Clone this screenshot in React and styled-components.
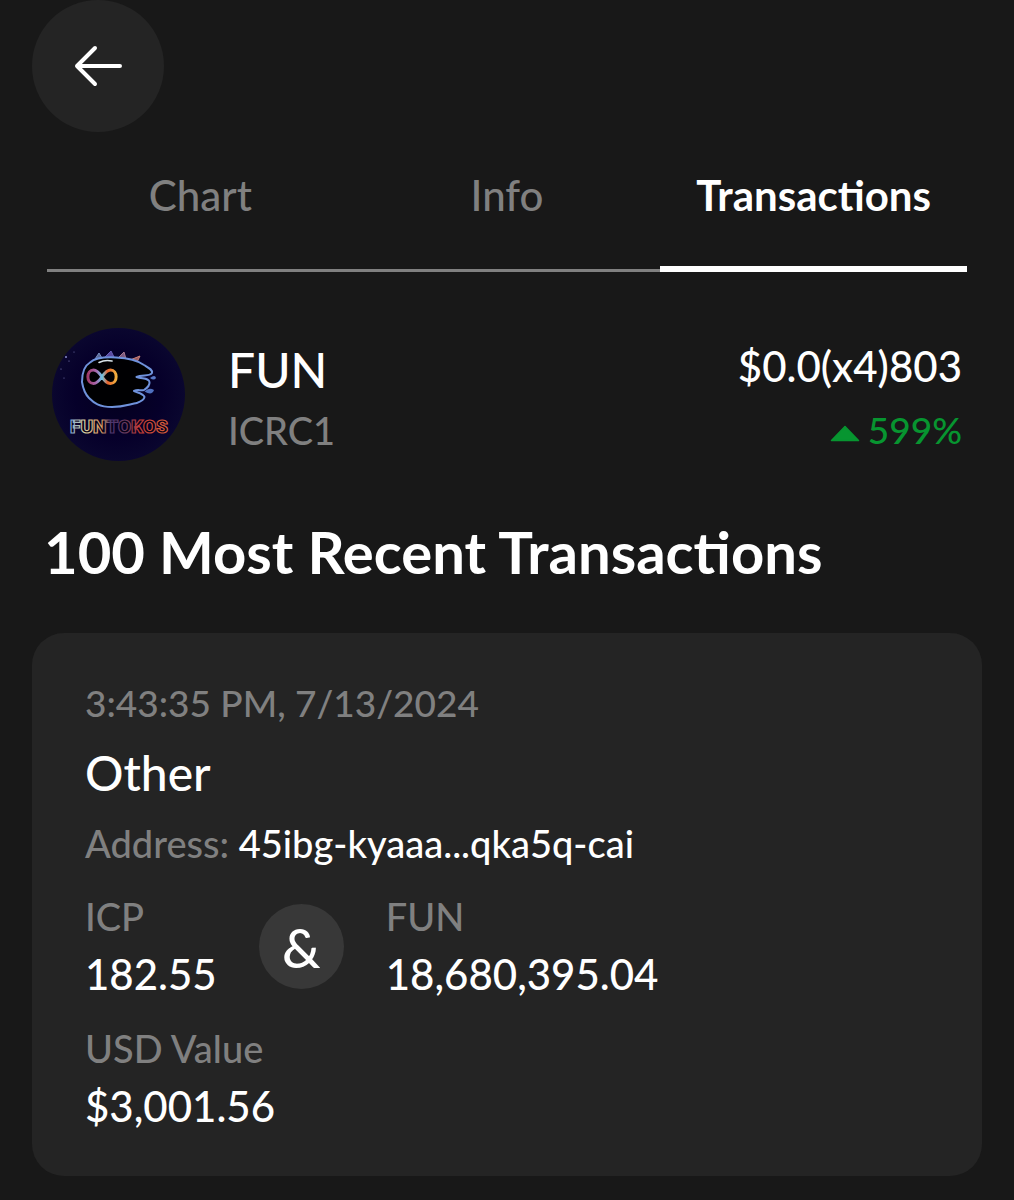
import styled, { createGlobalStyle } from "styled-components";

const GlobalStyle = createGlobalStyle`
  :root {
    --color-Background: #181818;
    --color-Card: #242424;
    --color-Badge: #383838;
    --color-White: #ffffff;
    --color-Gray: #808080;
    --color-Green: #079530;
  }
  * {
    box-sizing: border-box;
    margin: 0;
    padding: 0;
  }
  body {
    background-color: var(--color-Background);
    color: var(--color-White);
    font-family: Lato, "Liberation Sans", sans-serif;
    font-weight: 500;
  }
`;

const PageStyle = styled.main`
  min-height: 100vh;
  padding: 0 32px 24px;
`;

const BackButtonStyle = styled.button`
  display: flex;
  align-items: center;
  justify-content: center;
  width: 132px;
  height: 132px;
  border: none;
  border-radius: 50%;
  color: var(--color-White);
  background-color: var(--color-Card);
  cursor: pointer;
`;

const TabsStyle = styled.nav`
  display: grid;
  grid-template-columns: repeat(3, 1fr);
  margin: 0 15px;
  padding-top: 38px;
`;

const TabStyle = styled.button`
  height: 102px;
  padding-bottom: ${(props) => (props.$active ? "46px" : "49px")};
  border: none;
  border-bottom: ${(props) =>
    props.$active
      ? "6px solid var(--color-White)"
      : "3px solid var(--color-Gray)"};
  color: ${(props) =>
    props.$active ? "var(--color-White)" : "var(--color-Gray)"};
  background: none;
  font-family: inherit;
  font-size: 42px;
  font-weight: ${(props) => (props.$active ? 700 : 500)};
  line-height: 50px;
  cursor: pointer;
`;

const TokenStyle = styled.section`
  display: flex;
  align-items: center;
  column-gap: 43px;
  margin: 56px 20px 0;
`;

const TokenLogoStyle = styled.svg`
  flex: none;
  width: 133px;
  height: 133px;
`;

const TokenNameStyle = styled.h1`
  font-size: 48px;
  font-weight: 500;
  line-height: 70px;
`;

const TokenTypeStyle = styled.p`
  color: var(--color-Gray);
  font-size: 38px;
  line-height: 50px;
`;

const TokenPriceStyle = styled.div`
  display: flex;
  flex-direction: column;
  align-items: flex-end;
  row-gap: 8px;
  margin-left: auto;
`;

const PriceStyle = styled.p`
  font-size: 42px;
  line-height: 62px;
`;

const ChangeStyle = styled.p`
  display: flex;
  align-items: center;
  column-gap: 8px;
  color: var(--color-Green);
  font-size: 37px;
  line-height: 50px;
`;

const HeadingStyle = styled.h2`
  margin: 56px 12px 46px;
  font-size: 58px;
  font-weight: 700;
  line-height: 70px;
`;

const CardStyle = styled.article`
  display: flex;
  flex-direction: column;
  row-gap: 18px;
  padding: 46px 53px 45px;
  border-radius: 32px;
  background-color: var(--color-Card);
`;

const MutedStyle = styled.p`
  color: var(--color-Gray);
  font-size: 38px;
  line-height: 47px;
`;

const DateStyle = styled(MutedStyle)`
  font-size: 37px;
`;

const CardTitleStyle = styled.h3`
  font-size: 48px;
  font-weight: 500;
  line-height: 58px;
`;

const AddressStyle = styled.span`
  color: var(--color-White);
`;

const AmountsStyle = styled.div`
  display: flex;
  align-items: center;
  column-gap: 42px;
  padding: 8px 0;
`;

const AmountStyle = styled.div`
  display: flex;
  flex-direction: column;
  row-gap: 9px;
`;

const ValueStyle = styled.p`
  font-size: 42px;
  line-height: 50px;
`;

const AndStyle = styled.span`
  display: flex;
  align-items: center;
  justify-content: center;
  width: 85px;
  height: 85px;
  padding-top: 4px;
  border-radius: 50%;
  background-color: var(--color-Badge);
  font-size: 54px;
  line-height: 64px;
`;

const tabs = ["Chart", "Info", "Transactions"];

function ArrowIcon() {
  return (
    <svg width="50" height="44" viewBox="0 0 50 44" fill="none" aria-hidden="true">
      <path
        d="M22 4 L4 22 L22 40 M4 22 H47"
        stroke="currentColor"
        strokeWidth="4"
        strokeLinecap="round"
        strokeLinejoin="round"
      />
    </svg>
  );
}

function TokenLogo() {
  return (
    <TokenLogoStyle viewBox="0 0 133 133" role="img" aria-label="FUN token">
      <defs>
        <radialGradient id="sky" cx="0.5" cy="0.5" r="0.55">
          <stop offset="0" stopColor="#04001e" />
          <stop offset="0.6" stopColor="#06002a" />
          <stop offset="1" stopColor="#0b0830" />
        </radialGradient>
        <linearGradient id="loop" x1="0" x2="1">
          <stop offset="0" stopColor="#a03a6c" />
          <stop offset="0.3" stopColor="#a86ab0" />
          <stop offset="0.5" stopColor="#6cc7e8" />
          <stop offset="0.7" stopColor="#e8622c" />
          <stop offset="1" stopColor="#f0b040" />
        </linearGradient>
        <linearGradient id="word" x1="0" x2="1">
          <stop offset="0" stopColor="#7ba6d8" />
          <stop offset="0.15" stopColor="#d8d0a0" />
          <stop offset="0.32" stopColor="#d89a60" />
          <stop offset="0.42" stopColor="#4a3470" />
          <stop offset="0.58" stopColor="#6a3a5a" />
          <stop offset="0.7" stopColor="#c03a38" />
          <stop offset="1" stopColor="#d8603a" />
        </linearGradient>
      </defs>
      <circle cx="66.5" cy="66.5" r="66.5" fill="url(#sky)" />
      <g fill="#8a8cc8">
        <circle cx="14" cy="29" r="1" />
        <circle cx="17" cy="33" r="0.6" />
        <circle cx="9" cy="41" r="0.6" />
        <circle cx="22" cy="24" r="0.5" />
        <circle cx="12" cy="50" r="0.5" />
      </g>
      <path d="M43 31 L47 25 L50 30" fill="#5a6a9a" stroke="#7a90c0" />
      <path d="M52 30 L59 23 L62 29" fill="#5a4aa0" stroke="#6a60b8" />
      <path d="M66 30 L72 24 L74 31" fill="#7a5a80" stroke="#a87a90" />
      <path d="M78 32 L88 28 L85 34" fill="#9a5a60" stroke="#c8807a" />
      <path
        d="M30 54 C30 45 32 38 38 34.5 C43 30 54 29 64 29.5 C75 30 85 32 92 37 C97 40 101 42 100 45 C97 49 90 46 84.5 49 C91 51 97 50 97.5 54 C98 58 95 60 92 62 C88 63 86 61 82 63 C87 65 92 66 92.5 69 C92 73 88 73 85 75 C78 76 72 79 60 79 C47 79 42 75 37 70 C33 66 31 60 30 54 Z"
        fill="#000002"
        stroke="#6f92dc"
        strokeWidth="2"
        strokeLinejoin="round"
      />
      <path d="M47 34.5 Q53 31.5 60 33" fill="none" stroke="#d8e4ea" strokeWidth="1.6" strokeLinecap="round" />
      <path d="M98 50 Q103 46 104 50 Q102 53 98 50 Z" fill="#5878c8" />
      <path d="M92.5 63.5 Q97 59 102 62 Q100 68 92.5 63.5 Z" fill="#4f70c0" />
      <path
        d="M50 49 C46 43 44 42 41.5 42 C34 42 34 55.5 41.5 55.5 C49 55.5 51 42 58.5 42 C66 42 66 55.5 58.5 55.5 C55 55.5 53 53 50 49 Z"
        fill="none"
        stroke="url(#loop)"
        strokeWidth="3"
      />
      <text
        x="67"
        y="105"
        textAnchor="middle"
        fill="#060018"
        stroke="url(#word)"
        strokeWidth="1.2"
        fontFamily="Roboto, sans-serif"
        fontSize="19"
        fontWeight="900"
      >
        FUNTOKOS
      </text>
    </TokenLogoStyle>
  );
}

function UpIcon() {
  return (
    <svg width="30" height="25" viewBox="0 -8 30 25" aria-hidden="true">
      <path
        d="M15 1.5 L28.5 15.5 H1.5 Z"
        fill="currentColor"
        stroke="currentColor"
        strokeWidth="1.5"
        strokeLinejoin="round"
      />
    </svg>
  );
}

function Amount({ label, value }) {
  return (
    <AmountStyle>
      <MutedStyle>{label}</MutedStyle>
      <ValueStyle>{value}</ValueStyle>
    </AmountStyle>
  );
}

function Transaction({ date, type, address, from, to, usd }) {
  return (
    <CardStyle>
      <DateStyle>{date}</DateStyle>
      <CardTitleStyle>{type}</CardTitleStyle>
      <MutedStyle>
        Address: <AddressStyle>{address}</AddressStyle>
      </MutedStyle>
      <AmountsStyle>
        <Amount label="ICP" value={from} />
        <AndStyle>&amp;</AndStyle>
        <Amount label="FUN" value={to} />
      </AmountsStyle>
      <Amount label="USD Value" value={usd} />
    </CardStyle>
  );
}

function App() {
  return (
    <>
      <GlobalStyle />
      <PageStyle>
        <BackButtonStyle type="button" aria-label="Back">
          <ArrowIcon />
        </BackButtonStyle>
        <TabsStyle>
          {tabs.map((tab) => (
            <TabStyle key={tab} type="button" $active={tab === "Transactions"}>
              {tab}
            </TabStyle>
          ))}
        </TabsStyle>
        <TokenStyle>
          <TokenLogo />
          <div>
            <TokenNameStyle>FUN</TokenNameStyle>
            <TokenTypeStyle>ICRC1</TokenTypeStyle>
          </div>
          <TokenPriceStyle>
            <PriceStyle>$0.0(x4)803</PriceStyle>
            <ChangeStyle>
              <UpIcon />
              599%
            </ChangeStyle>
          </TokenPriceStyle>
        </TokenStyle>
        <HeadingStyle>100 Most Recent Transactions</HeadingStyle>
        <Transaction
          date="3:43:35 PM, 7/13/2024"
          type="Other"
          address="45ibg-kyaaa...qka5q-cai"
          from="182.55"
          to="18,680,395.04"
          usd="$3,001.56"
        />
      </PageStyle>
    </>
  );
}

export default App;
